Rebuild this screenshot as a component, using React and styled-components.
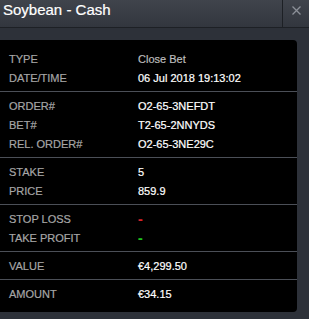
import React from "react";
import styled, { createGlobalStyle } from "styled-components";

const GlobalStyle = createGlobalStyle`
  html, body {
    margin: 0;
    padding: 0;
    background: #2d3139;
  }
  body {
    font-family: "Liberation Sans", Arial, Helvetica, sans-serif;
  }
`;

const Window = styled.div`
  width: 309px;
  height: 319px;
  background: #2d3139;
  overflow: hidden;
  display: flex;
  flex-direction: column;
`;

const Header = styled.div`
  height: 27px;
  display: flex;
  align-items: stretch;
  background: linear-gradient(#40444c, #32363e);
  border-bottom: 1px solid #1d2025;
`;

const Title = styled.div`
  flex: 1;
  padding: 1px 0 0 3px;
  font-size: 15px;
  line-height: 18px;
  color: #ffffff;
  -webkit-text-stroke: 0.2px #ffffff;
`;

const Close = styled.div`
  width: 27px;
  border-left: 1px solid #1d2025;
  display: flex;
  justify-content: center;
  padding-top: 6px;
  box-sizing: border-box;
`;

const Panel = styled.div`
  margin-top: 12px;
  width: 297px;
  background: #000;
  border-radius: 0 4px 4px 0;
  padding: 5px 0;
`;

const Section = styled.div`
  padding: 4px 0;
  border-top: ${({ $first }) => ($first ? "none" : "1px solid #4b4f57")};
`;

const Row = styled.div`
  display: flex;
  height: 19px;
  align-items: center;
  font-size: 11px;
`;

const Label = styled.div`
  width: 129px;
  padding-left: 9px;
  color: #a6a6a6;
  -webkit-text-stroke: 0.2px #a6a6a6;
`;

const Value = styled.div`
  color: ${({ $color }) => $color || "#ffffff"};
  -webkit-text-stroke: 0.2px ${({ $color }) => $color || "#ffffff"};
  ${({ $dash }) =>
    $dash &&
    `font-size: 14px;
  font-weight: 700;
  line-height: 1;
  padding-top: 1px;`}
`;

const sections = [
  [
    ["TYPE", "Close Bet", "#bdbdbd"],
    ["DATE/TIME", "06 Jul 2018 19:13:02"],
  ],
  [
    ["ORDER#", "O2-65-3NEFDT"],
    ["BET#", "T2-65-2NNYDS"],
    ["REL. ORDER#", "O2-65-3NE29C"],
  ],
  [
    ["STAKE", "5"],
    ["PRICE", "859.9"],
  ],
  [
    ["STOP LOSS", "-", "#d8232a"],
    ["TAKE PROFIT", "-", "#1fc31f"],
  ],
  [["VALUE", "€4,299.50"]],
  [["AMOUNT", "€34.15"]],
];

const App = () => {
  return (
    <Window>
      <GlobalStyle />
      <Header>
        <Title>Soybean - Cash</Title>
        <Close>
          <svg width="9" height="9" viewBox="0 0 9 9">
            <path d="M0.5 0.5 L8.5 8.5 M8.5 0.5 L0.5 8.5" stroke="#8c9098" strokeWidth="1.3" />
          </svg>
        </Close>
      </Header>
      <Panel>
        {sections.map((rows, i) => (
          <Section key={i} $first={i === 0}>
            {rows.map(([label, value, color]) => (
              <Row key={label}>
                <Label>{label}</Label>
                <Value $color={color} $dash={value === "-"}>
                  {value}
                </Value>
              </Row>
            ))}
          </Section>
        ))}
      </Panel>
    </Window>
  );
};

export default App;
